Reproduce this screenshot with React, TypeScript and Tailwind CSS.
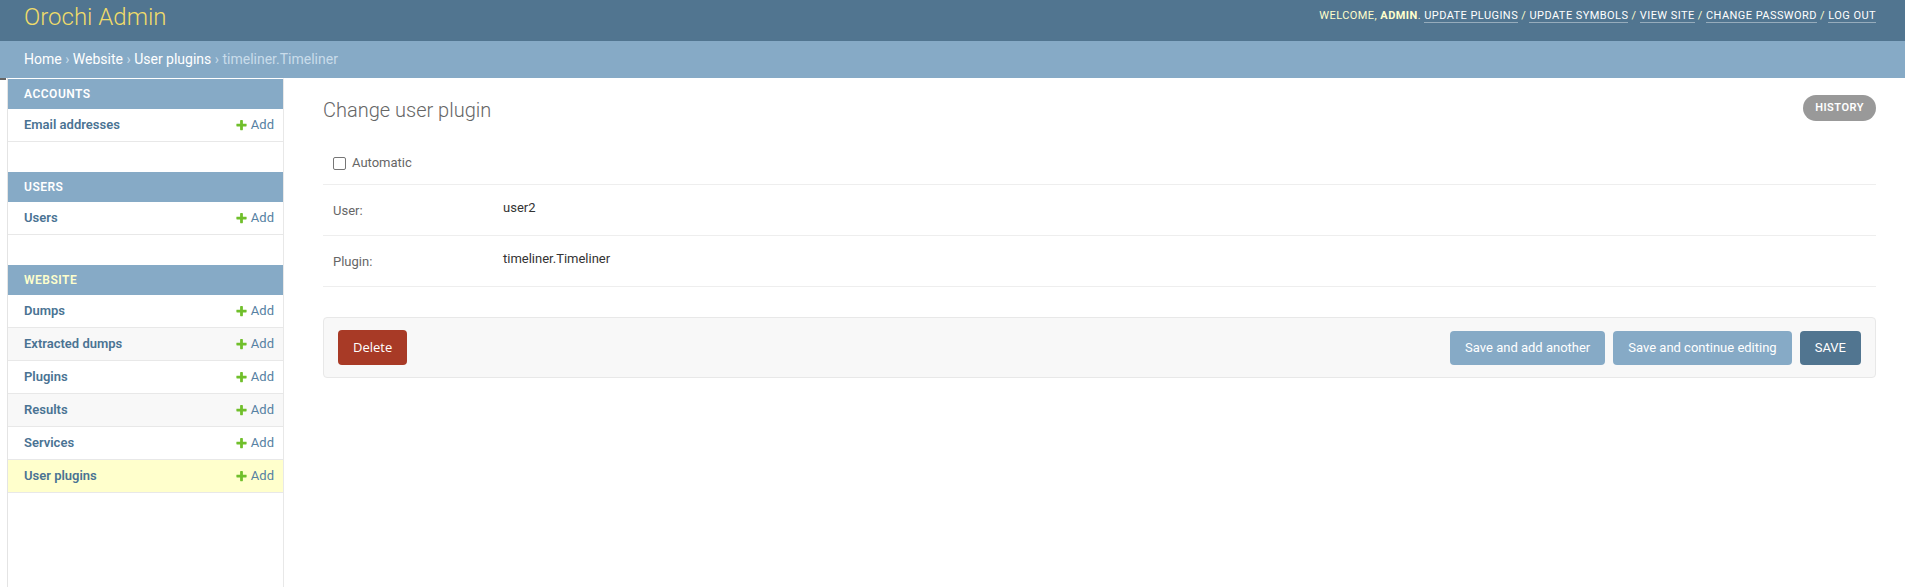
import React from "react";

const PlusIcon = () => (
  <svg width="13" height="13" viewBox="0 0 1792 1792" className="shrink-0">
    <path
      fill="#70bf2b"
      d="M1600 736v192q0 40-28 68t-68 28h-416v416q0 40-28 68t-68 28h-192q-40 0-68-28t-28-68v-416h-416q-40 0-68-28t-28-68v-192q0-40 28-68t68-28h416v-416q0-40 28-68t68-28h192q40 0 68 28t28 68v416h416q40 0 68 28t28 68z"
    />
  </svg>
);

type Row = { name: string; alt?: boolean; selected?: boolean };
type Mod = { title: string; current?: boolean; rows: Row[] };

const modules: Mod[] = [
  { title: "Accounts", rows: [{ name: "Email addresses" }] },
  { title: "Users", rows: [{ name: "Users" }] },
  {
    title: "Website",
    current: true,
    rows: [
      { name: "Dumps" },
      { name: "Extracted dumps", alt: true },
      { name: "Plugins" },
      { name: "Results", alt: true },
      { name: "Services" },
      { name: "User plugins", selected: true },
    ],
  },
];

function SideRow({ row }: { row: Row }) {
  const bg = row.selected ? "bg-[#ffffcc]" : row.alt ? "bg-[#f8f8f8]" : "bg-white";
  return (
    <div
      className={`flex h-[33px] items-center justify-between border-b border-[#e8e8e8] pl-4 pr-[9px] ${bg}`}
    >
      <span className="text-[13px] font-semibold text-[#4a7393]">{row.name}</span>
      <span className="flex items-center gap-[3px] text-[13px] text-[#5681a2]">
        <PlusIcon />
        Add
      </span>
    </div>
  );
}

function ToolLink({ children }: { children: React.ReactNode }) {
  return <span className="border-b border-white/40 text-white">{children}</span>;
}

export default function App() {
  return (
    <div className="flex min-h-screen flex-col bg-white font-['Roboto','Liberation_Sans',sans-serif]">
      <header className="flex h-[41px] items-start justify-between bg-[#517590] pl-6 pr-[29px]">
        <div className="mt-[5px] text-[24px] font-light leading-6 text-[#f0dc6a]">Orochi Admin</div>
        <div className="mt-[8px] text-[11px] uppercase leading-[15px] tracking-[0.44px] text-[#ffffcc]">
          Welcome, <strong className="font-bold">admin</strong>.{" "}
          <ToolLink>Update plugins</ToolLink> / <ToolLink>Update symbols</ToolLink> /{" "}
          <ToolLink>View site</ToolLink> / <ToolLink>Change password</ToolLink> /{" "}
          <ToolLink>Log out</ToolLink>
        </div>
      </header>
      <div className="h-[37px] bg-[#86aac6] pl-6 pt-[10px] text-[14px] leading-[17px] text-[#c9dcea]">
        <span className="text-white">Home</span> › <span className="text-white">Website</span> ›{" "}
        <span className="text-white">User plugins</span> › timeliner.Timeliner
      </div>
      <div className="flex flex-1">
        <div className="w-[8px] shrink-0 border-r border-[#e4e4e4]">
          <div className="h-[2px] w-[6px] bg-[#666]" />
        </div>
        <nav className="w-[276px] shrink-0 border-r border-t border-r-[#e8e8e8] border-t-white">
          {modules.map((m) => (
            <div key={m.title} className="mb-[30px]">
              <div
                className={`flex h-[30px] items-center bg-[#86aac6] pl-4 text-[12px] font-semibold uppercase tracking-[0.5px] ${
                  m.current ? "text-[#ffffcc]" : "text-white"
                }`}
              >
                {m.title}
              </div>
              {m.rows.map((r) => (
                <SideRow key={r.name} row={r} />
              ))}
            </div>
          ))}
        </nav>
        <main className="flex-1 pl-[39px] pr-[29px] pt-[17px]">
          <div className="flex items-start justify-between">
            <h1 className="mt-[3px] text-[20px] font-light leading-6 text-[#666]">Change user plugin</h1>
            <span className="flex h-[26px] items-center rounded-full bg-[#999] px-3 text-[11px] font-semibold uppercase tracking-[0.5px] text-white">
              History
            </span>
          </div>
          <div className="mt-[20px]">
            <div className="flex items-center border-b border-[#eee] px-[10px] py-[10px]">
              <div className="flex h-[22px] items-center gap-[6px]">
                <span className="h-[13px] w-[13px] rounded-[2px] border border-[#767676] bg-white" />
                <span className="text-[13px] text-[#666]">Automatic</span>
              </div>
            </div>
            <div className="flex h-[51px] border-b border-[#eee] px-[10px]">
              <div className="w-[170px] pt-[18px] text-[13px] leading-4 text-[#666]">User:</div>
              <div className="pt-[15px] text-[13px] leading-4 text-[#333]">user2</div>
            </div>
            <div className="flex h-[51px] border-b border-[#eee] px-[10px]">
              <div className="w-[170px] pt-[18px] text-[13px] leading-4 text-[#666]">Plugin:</div>
              <div className="pt-[15px] text-[13px] leading-4 text-[#333]">timeliner.Timeliner</div>
            </div>
          </div>
          <div className="mt-[30px] flex items-center rounded-[4px] border border-[#e8e8e8] bg-[#f8f8f8] px-[14px] py-[12px]">
            <span className="flex h-[35px] items-center rounded-[4px] bg-[#a83a26] px-[15px] font-['Open_Sans',sans-serif] text-[13px] text-white">
              Delete
            </span>
            <div className="ml-auto flex gap-2">
              <span className="flex h-[34px] items-center rounded-[4px] bg-[#86aac6] px-[15px] text-[13px] text-white">
                Save and add another
              </span>
              <span className="flex h-[34px] items-center rounded-[4px] bg-[#86aac6] px-[15px] text-[13px] text-white">
                Save and continue editing
              </span>
              <span className="flex h-[34px] items-center rounded-[4px] bg-[#517590] px-[15px] text-[13px] uppercase text-white">
                Save
              </span>
            </div>
          </div>
        </main>
      </div>
    </div>
  );
}
